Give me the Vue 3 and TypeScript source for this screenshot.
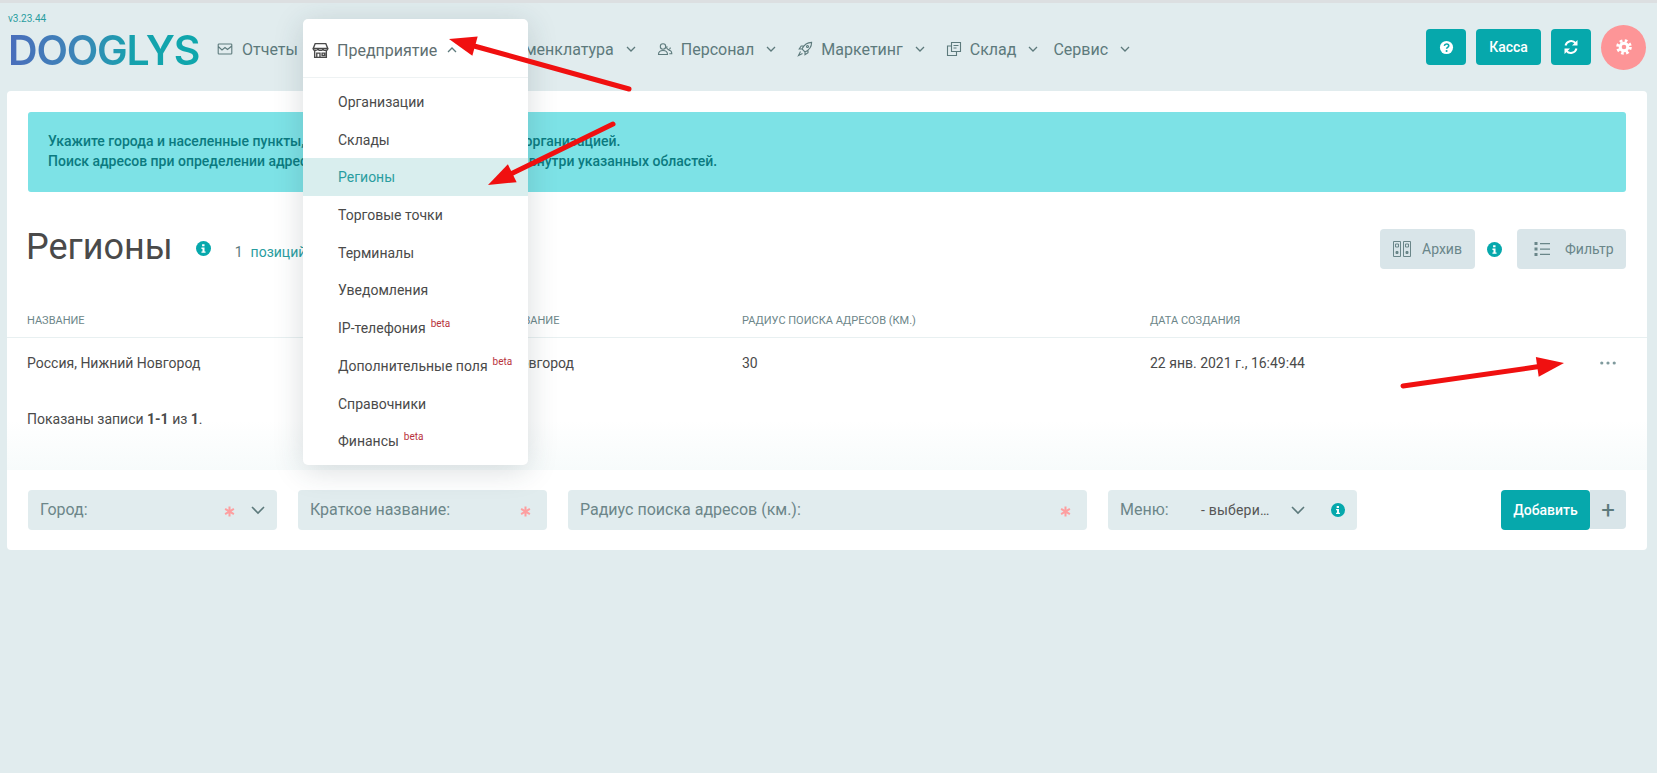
<script setup lang="ts">
const navIcons: Record<string, string> = {
    chart: 'M2 3h12a.8.8 0 0 1 .8.8v8.4a.8.8 0 0 1-.8.8H2a.8.8 0 0 1-.8-.8V3.8A.8.8 0 0 1 2 3zM1.2 5.5L5 9l3-2.5 2.5 2 4.3-3.5',
    store: 'M3 1.500h10l1.800 4.500H1.200zM1.200 6c0 2.400 4.500 2.400 4.500 0 0 2.400 4.600 2.400 4.600 0 0 2.400 4.500 2.400 4.500 0M2.500 8.500v6h11v-6M4.500 14.500v-4h3v4M9.500 10.500h2.500v2.200H9.500z',
    box: 'M2 5l6-3 6 3v6.5l-6 3-6-3zM2 5l6 3 6-3M8 8v6.5',
    users: 'M8.7 5.5a2.7 2.7 0 1 1-5.4 0 2.7 2.7 0 0 1 5.4 0zM1.5 13.5c0-2.8 2-4 4.5-4s4.5 1.2 4.500 4zM13.300 6.500a1.800 1.800 0 1 1-3 -1.200M11.500 9.200c2 0 3.300 1.200 3.300 3.500h-2.500',
    rocket: 'M14.6 1.4C10 1.4 7 4 5 8l3 3c4-2 6.6-5 6.6-9.6zM5 8H2.2l2-3h3M8 11v2.8l3-2V9M11.5 5.5a1 1 0 1 1-2 0 1 1 0 0 1 2 0zM3.5 10.5L1.5 14.500l4-2',
    copy: 'M5.500 1.500h9v9h-9zM5.500 5h-4v9.500h9v-4M7.500 4.500h5M7.500 7h3'
}

const nav = [
    { label: 'Отчеты', icon: 'chart', chevron: false },
    { label: 'Предприятие', icon: 'store', chevron: true, open: true },
    { label: 'Номенклатура', icon: 'box', chevron: true },
    { label: 'Персонал', icon: 'users', chevron: true },
    { label: 'Маркетинг', icon: 'rocket', chevron: true },
    { label: 'Склад', icon: 'copy', chevron: true },
    { label: 'Сервис', icon: '', chevron: true }
]

const menu = [
    { label: 'Организации' },
    { label: 'Склады' },
    { label: 'Регионы', active: true },
    { label: 'Торговые точки' },
    { label: 'Терминалы' },
    { label: 'Уведомления' },
    { label: 'IP-телефония', beta: true },
    { label: 'Дополнительные поля', beta: true },
    { label: 'Справочники' },
    { label: 'Финансы', beta: true }
]

const arrows = [
    { x1: 629, y1: 89, x2: 449, y2: 39 },
    { x1: 613, y1: 124, x2: 488, y2: 185 },
    { x1: 1403, y1: 386, x2: 1564, y2: 363 }
].map((a) => {
    const len = Math.hypot(a.x2 - a.x1, a.y2 - a.y1)
    const ux = (a.x2 - a.x1) / len
    const uy = (a.y2 - a.y1) / len
    const bx = a.x2 - ux * 27
    const by = a.y2 - uy * 27
    const head = [
        `${a.x2},${a.y2}`,
        `${bx - uy * 10},${by + ux * 10}`,
        `${bx + uy * 10},${by - ux * 10}`
    ].join(' ')
    return { ...a, bx, by, head }
})
</script>

<template>
<div class='Page'>
    <header class='Header'>
        <div class='Brand'>
            <div class='Version'>v3.23.44</div>
            <div class='Logo'>DOOGLYS</div>
        </div>
        <nav class='Nav'>
            <div class='NavItem' v-for='item in nav' :key='item.label' :class='{ Open: item.open }'>
                <svg v-if='item.icon' class='NavIcon' viewBox='0 0 16 16'><path :d='navIcons[item.icon]' /></svg>
                <span>{{ item.label }}</span>
                <svg v-if='item.chevron' class='Chevron' viewBox='0 0 10 6'><path d='M1 1l4 4 4-4' /></svg>
            </div>
        </nav>
        <div class='Actions'>
            <button class='TealButton Square'>
                <svg viewBox='0 0 16 16' width='15' height='15'>
                    <circle cx='8' cy='8' r='7' fill='#fff' />
                    <path d='M5.700 6.200c.2-1.400 1.200-2 2.400-2 1.300 0 2.300.8 2.300 1.900 0 1.700-2.300 1.700-2.300 3.200' fill='none' stroke='#06a8ac' stroke-width='1.700' />
                    <circle cx='8.100' cy='11.700' r='1.100' fill='#06a8ac' />
                </svg>
            </button>
            <button class='TealButton Wide'>Касса</button>
            <button class='TealButton Square'>
                <svg viewBox='0 0 16 16' width='16' height='16' fill='none' stroke='#fff' stroke-width='2'>
                    <path d='M2.500 6.500A5.800 5.800 0 0 1 12.600 4.200' />
                    <path d='M13.500 9.500A5.800 5.800 0 0 1 3.400 11.800' />
                    <path d='M14.500 1v5.500H9zM1.500 15V9.500H7z' fill='#fff' stroke='none' />
                </svg>
            </button>
            <button class='Gear'>
                <svg viewBox='0 0 16 16' width='16' height='16'>
                    <circle cx='8' cy='8' r='6.300' fill='none' stroke='#fff' stroke-width='3' stroke-dasharray='2.600 2.348' />
                    <circle cx='8' cy='8' r='3.800' fill='none' stroke='#fff' stroke-width='3' />
                </svg>
            </button>
        </div>
    </header>

    <main class='Card'>
        <div class='Alert'>
            <div>Укажите города и населенные пункты, в которых выполняется продаж организацией.</div>
            <div>Поиск адресов при определении адреса доставки будет производиться внутри указанных областей.</div>
        </div>

        <div class='TitleRow'>
            <h1 class='Title'>Регионы</h1>
            <svg class='Info TitleInfo' viewBox='0 0 16 16'>
                <circle cx='8' cy='8' r='8' />
                <path d='M6.500 3.500h2.600v2.200H6.500zM5.800 6.900h3.300v4.200h1.100v1.500H5.800v-1.500h1.100V8.400H5.800z' />
            </svg>
            <span class='Count'>1</span>
            <span class='CountLabel'>позиций</span>
            <div class='Tools'>
                <button class='GreyButton Archive'>
                    <svg viewBox='0 0 20 18' width='20' height='18' fill='none' stroke='#6a8689' stroke-width='1'>
                        <path d='M1.500 1.500h7v15h-7zM11.500 1.500h7v15h-7zM3.500 4h3v3h-3zM13.500 4h3v3h-3z' />
                        <path d='M4 11.500h2v2H4zM14 11.500h2v2h-2z' fill='#6a8689' />
                    </svg>
                    Архив
                </button>
                <svg class='Info' viewBox='0 0 16 16'>
                    <circle cx='8' cy='8' r='8' />
                    <path d='M6.500 3.500h2.600v2.200H6.500zM5.800 6.900h3.300v4.200h1.100v1.500H5.800v-1.500h1.100V8.400H5.800z' />
                </svg>
                <button class='GreyButton Filter'>
                    <svg viewBox='0 0 16 16' width='16' height='16' fill='#6a8689'>
                        <path d='M.500 1h3v3h-3zM.500 6.500h3v3h-3zM.500 12h3v3h-3z' />
                        <path d='M6 2h10v1.300H6zM6 7.400h10v1.300H6zM6 12.800h10v1.300H6z' />
                    </svg>
                    <span>Фильтр</span>
                </button>
            </div>
        </div>

        <div class='Table'>
            <div class='Row Head'>
                <div>Название</div>
                <div class='ShortHead'>Краткое название</div>
                <div>Радиус поиска адресов (км.)</div>
                <div>Дата создания</div>
                <div></div>
            </div>
            <div class='Row Body'>
                <div>Россия, Нижний Новгород</div>
                <div>г. Нижний Новгород</div>
                <div>30</div>
                <div>22 янв. 2021 г., 16:49:44</div>
                <svg class='Dots' viewBox='0 0 18 4' width='16' height='4'>
                    <circle cx='2' cy='2' r='1.800' />
                    <circle cx='9' cy='2' r='1.800' />
                    <circle cx='16' cy='2' r='1.800' />
                </svg>
            </div>
            <div class='Summary'>Показаны записи <b>1-1</b> из <b>1</b>.</div>
        </div>

        <form class='Form' @submit.prevent>
            <div class='Field City'>
                <span class='FieldLabel'>Город:</span>
                <svg class='Star' viewBox='0 0 12 12'><path d='M6 0.500v11M1.200 3.200l9.600 5.600M10.800 3.200l-9.600 5.600' /></svg>
                <svg class='FieldChevron' viewBox='0 0 14 9'><path d='M1 1l6 6 6-6' /></svg>
            </div>
            <div class='Field Short'>
                <span class='FieldLabel'>Краткое название:</span>
                <svg class='Star' viewBox='0 0 12 12'><path d='M6 0.500v11M1.200 3.200l9.600 5.600M10.800 3.200l-9.600 5.600' /></svg>
            </div>
            <div class='Field Radius'>
                <span class='FieldLabel'>Радиус поиска адресов (км.):</span>
                <svg class='Star' viewBox='0 0 12 12'><path d='M6 0.500v11M1.200 3.200l9.600 5.600M10.800 3.200l-9.600 5.600' /></svg>
            </div>
            <div class='Field MenuField'>
                <span class='FieldLabel'>Меню:</span>
                <span class='FieldValue'>- выбери…</span>
                <svg class='FieldChevron' viewBox='0 0 14 9'><path d='M1 1l6 6 6-6' /></svg>
                <svg class='Info' viewBox='0 0 16 16'>
                    <circle cx='8' cy='8' r='8' />
                    <path d='M6.500 3.500h2.600v2.200H6.500zM5.800 6.900h3.300v4.200h1.100v1.500H5.800v-1.500h1.100V8.400H5.800z' />
                </svg>
            </div>
            <div class='Submit'>
                <button class='TealButton Add'>Добавить</button>
                <div class='Plus'>+</div>
            </div>
        </form>
    </main>

    <div class='Dropdown'>
        <div class='DropdownHead'>
            <svg class='StoreIcon' viewBox='0 0 16 16'><path :d='navIcons.store' /></svg>
            <span>Предприятие</span>
            <svg class='Chevron Up' viewBox='0 0 10 6'><path d='M1 5l4-4 4 4' /></svg>
        </div>
        <div class='DropdownList'>
            <div class='DropdownItem' v-for='item in menu' :key='item.label' :class='{ Active: item.active }'>
                {{ item.label }}<sup v-if='item.beta' class='Beta'>beta</sup>
            </div>
        </div>
    </div>

    <svg class='Arrows' width='1657' height='773'>
        <g v-for='a in arrows' :key='a.x1'>
            <line :x1='a.x1' :y1='a.y1' :x2='a.bx' :y2='a.by' />
            <polygon :points='a.head' />
        </g>
    </svg>
</div>
</template>

<style>
body {
    background: #e1ecee;
}
</style>

<style scoped>
.Page {
    position: relative;
    min-height: 773px;
    overflow: hidden;
    box-sizing: border-box;
    border-top: 3px solid #dcdfe1;
    font-family: Roboto, sans-serif;
    color: #4a4a4a;
}

button {
    font-family: inherit;
    border: none;
    cursor: pointer;
}

.Header {
    display: flex;
    align-items: center;
    height: 88px;
    padding-left: 8px;
    padding-right: 11px;
}

.Brand {
    width: 209px;
    flex: none;
    margin-top: -13px;
}

.Version {
    font-size: 10px;
    line-height: 12px;
    color: #2a9da0;
}

.Logo {
    font-family: Inter, sans-serif;
    font-size: 41px;
    line-height: 36px;
    font-weight: 600;
    letter-spacing: -1.2px;
    background: linear-gradient(90deg, #4a6dbb 0%, #3d85b8 35%, #15a2ad 65%, #0ea7ac 100%);
    -webkit-background-clip: text;
    background-clip: text;
    color: transparent;
    width: 195px;
    margin-top: 7px;
}

.Nav {
    display: flex;
    align-items: center;
    gap: 21px;
    font-size: 16px;
    color: #5d7a7c;
    margin-top: 4px;
}

.NavItem {
    display: flex;
    align-items: center;
    gap: 8px;
}

.NavItem:first-child span {
    margin-left: 1px;
}

/* the open item is drawn by the dropdown that lies over it */
.NavItem.Open {
    visibility: hidden;
    margin-right: -6px;
}

.NavItem:last-child {
    margin-left: -6px;
}

.NavIcon {
    width: 16px;
    height: 16px;
    fill: none;
    stroke: #5d7a7c;
    stroke-width: 1.1;
}

.Chevron {
    width: 10px;
    height: 6px;
    margin-left: 4px;
    fill: none;
    stroke: #5d7a7c;
    stroke-width: 1.3;
}

.Actions {
    margin-left: auto;
    display: flex;
    align-items: center;
    gap: 10px;
}

.TealButton {
    display: flex;
    align-items: center;
    justify-content: center;
    height: 36px;
    background: #06a8ac;
    color: #fff;
    font-size: 14px;
    font-weight: 500;
    border-radius: 4px;
}

.Square {
    width: 40px;
}

.Wide {
    width: 65px;
}

.Gear {
    display: flex;
    align-items: center;
    justify-content: center;
    width: 45px;
    height: 45px;
    border-radius: 50%;
    background: #fd9597;
}

.Card {
    margin-left: 7px;
    margin-right: 10px;
    background: #fff;
    border-radius: 4px;
    padding-top: 21px;
    height: 459px;
    box-sizing: border-box;
}

.Alert {
    margin: 0 21px;
    height: 80px;
    box-sizing: border-box;
    padding-top: 19px;
    background: #7de2e6;
    border-radius: 3px;
    color: #0b7a80;
    font-size: 14px;
    font-weight: 500;
    line-height: 20px;
    padding-left: 20px;
}

.TitleRow {
    display: flex;
    align-items: center;
    height: 40px;
    margin: 37px 21px 0 19px;
}

.Title {
    margin: 0 0 4px;
    font-size: 36px;
    font-weight: 400;
    color: #4a4a4a;
    line-height: 40px;
}

.Info {
    width: 15px;
    height: 15px;
    fill: #06a8ac;
    flex: none;
}

.Info path {
    fill: #fff;
}

.TitleInfo {
    margin-left: 23px;
    margin-top: -2px;
}

.Count {
    font-size: 14px;
    margin-left: 24px;
    margin-top: 6px;
    color: #5d7a7c;
}

.CountLabel {
    font-size: 14px;
    margin-left: 8px;
    margin-top: 6px;
    color: #2a9da0;
}

.Tools {
    margin-left: auto;
    display: flex;
    align-items: center;
}

.GreyButton {
    display: flex;
    align-items: center;
    height: 40px;
    background: #d9e5e9;
    color: #6a8689;
    font-size: 14px;
    border-radius: 4px;
}

.Archive {
    width: 95px;
    padding-left: 12px;
    gap: 10px;
}

.Filter {
    width: 109px;
    padding-left: 17px;
    gap: 15px;
}

.Tools .Info {
    margin: 0 15px 0 12px;
}

.Table {
    margin-top: 35px;
    height: 166px;
    box-sizing: border-box;
    background: linear-gradient(180deg, #fff 0%, #fff 70%, #f7fbfb 100%);
}

.Row {
    display: grid;
    grid-template-columns: 414px 301px 408px 1fr 47px;
    align-items: center;
    padding-left: 20px;
}

.Head {
    height: 34px;
    font-size: 11px;
    text-transform: uppercase;
    color: #6c8689;
    border-bottom: 1px solid #e8f0f1;
    box-sizing: border-box;
}

.ShortHead {
    padding-left: 11px;
}

.Body {
    height: 50px;
    font-size: 14px;
}

.Dots {
    fill: #7f9a9d;
}

.Summary {
    margin-top: 21px;
    padding-left: 20px;
    font-size: 14px;
    line-height: 20px;
}

.Summary b {
    font-weight: 700;
}

.Form {
    display: flex;
    gap: 21px;
    margin: 20px 21px 0;
}

.Field {
    display: flex;
    align-items: center;
    height: 40px;
    box-sizing: border-box;
    padding: 0 12px;
    background: #e1ecee;
    border-radius: 4px;
    font-size: 16px;
    color: #6c8689;
}

.City,
.Short,
.MenuField {
    width: 249px;
    flex: none;
}

.Radius {
    width: 519px;
    flex: none;
}

.FieldLabel {
    margin-right: auto;
    margin-top: -2px;
}

.Star {
    width: 11px;
    height: 11px;
    fill: none;
    stroke: #fd9fa0;
    stroke-width: 2.200;
    margin-top: 2px;
    margin-right: 4px;
}

.FieldChevron {
    width: 14px;
    height: 9px;
    fill: none;
    stroke: #5d7a7c;
    stroke-width: 1.600;
}

.City .FieldChevron {
    margin-left: 12px;
}

.FieldValue {
    width: 88px;
    font-size: 14px;
    letter-spacing: .2px;
    color: #555;
    margin-right: 2px;
}

.MenuField .Info {
    margin-left: 26px;
    width: 14px;
    height: 14px;
}

.Submit {
    display: flex;
    margin-left: auto;
}

.Add {
    width: 89px;
    height: 40px;
}

.Plus {
    width: 36px;
    height: 39px;
    display: flex;
    align-items: center;
    justify-content: center;
    background: #d9e5e9;
    border-radius: 0 4px 4px 0;
    color: #5d7a7c;
    font-size: 24px;
    font-weight: 400;
}

.Dropdown {
    position: absolute;
    left: 303px;
    top: 16px;
    width: 225px;
    height: 446px;
    background: #fff;
    border-radius: 5px;
    box-shadow: 0 5px 30px rgba(40, 60, 70, 0.18);
}

.DropdownHead {
    display: flex;
    align-items: center;
    height: 59px;
    box-sizing: border-box;
    padding: 4px 0 0 9px;
    border-bottom: 1px solid #eef2f3;
    font-size: 16px;
    color: #5f6f71;
}

.StoreIcon {
    width: 17px;
    height: 17px;
    margin-right: 8px;
    fill: none;
    stroke: #4a4a4a;
    stroke-width: 1.300;
}

.Up {
    margin-left: 10px;
}

.DropdownList {
    padding-top: 5px;
}

.DropdownItem {
    height: 37.700px;
    line-height: 39.500px;
    padding-left: 35px;
    font-size: 14px;
    color: #4a4a4a;
    white-space: nowrap;
}

.DropdownItem.Active {
    background: #d9eeee;
    color: #2a9da0;
}

.Beta {
    font-size: 10px;
    color: #b8323c;
    margin-left: 5px;
    line-height: 0;
    vertical-align: 6px;
}

.Arrows {
    position: absolute;
    left: 0;
    top: -3px;
    pointer-events: none;
}

.Arrows line {
    stroke: #f01010;
    stroke-width: 5;
    stroke-linecap: round;
}

.Arrows polygon {
    fill: #f01010;
}
</style>
